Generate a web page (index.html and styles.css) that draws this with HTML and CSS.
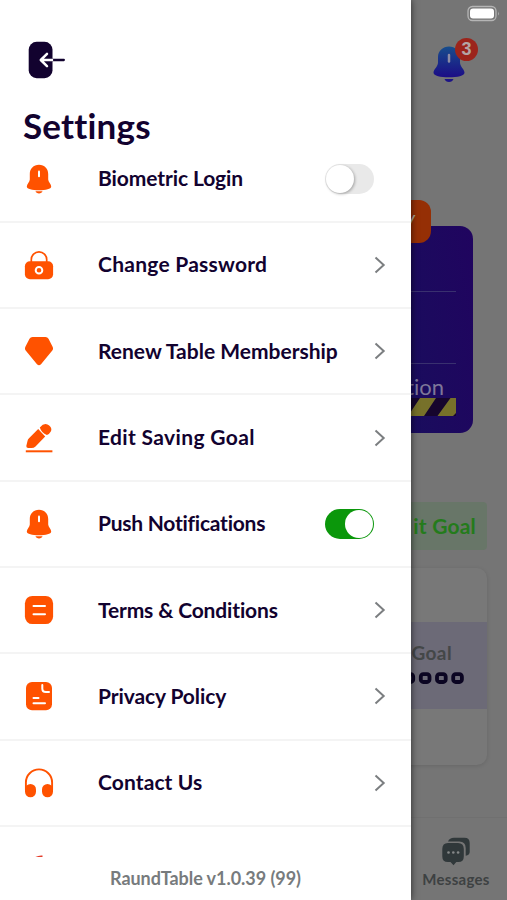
FILE: index.html
```html
<!DOCTYPE html>
<html lang="en">
<head>
<meta charset="utf-8">
<meta name="viewport" content="width=device-width">
<title>Settings</title>
<link rel="stylesheet" href="styles.css">
</head>
<body>
<svg class="defs" width="0" height="0">
  <symbol id="bell" viewBox="0 0 30 30">
    <path d="M15 .8C9.500.8 5.800 4.800 5.800 10v5.500c0 2.300-3 4.800-3 7 0 2.600 5.500 3.700 12.200 3.700s12.200-1.100 12.200-3.700c0-2.200-3-4.700-3-7V10C24.200 4.800 20.500.8 15 .8z"/>
    <path d="M11.500 27.200h7c-.5 1.400-1.800 2.200-3.500 2.200s-3-.8-3.500-2.200z"/>
    <path d="M15 7.500v4.700" stroke="var(--mark)" stroke-width="2" stroke-linecap="round"/>
  </symbol>
  <symbol id="chevron" viewBox="0 0 12 18"><path d="M1.500 1.500 9.700 9l-8.200 7.500" fill="none" stroke="#7b7e80" stroke-width="2"/></symbol>
</svg>

<main class="home">
  <header class="status"><svg width="34" height="18" viewBox="0 0 34 18"><rect x="1" y="1.500" width="28" height="14" rx="4.500" fill="none" stroke="#b5b5b5" stroke-width="1.300"/><rect x="3" y="3.500" width="24" height="10" rx="3" fill="#fff"/><path d="M31 6.500q1.800 2 0 4z" fill="#aaa"/></svg></header>
  <div class="alerts">
    <svg width="34" height="37" viewBox="0 0 34 37"><defs><linearGradient id="blue" x1="0" y1="0" x2="0" y2="1"><stop offset="0" stop-color="#174d8c"/><stop offset="1" stop-color="#1c0c86"/></linearGradient></defs><path d="M17 .5C11 .5 6 5 6 11v5.500c0 4-4.500 7-4.500 10.200 0 3 7 4.600 15.500 4.600s15.500-1.600 15.500-4.600c0-3.200-4.500-6.200-4.500-10.200V11C28 5 23 .5 17 .5z" fill="url(#blue)"/><path d="M12.500 33h9c-.7 2-2.300 3-4.500 3s-3.800-1-4.500-3z" fill="#1c1387"/><path d="M17 9v6.500" stroke="#8c8ca5" stroke-width="2.500" stroke-linecap="round"/></svg>
    <span class="count">3</span>
  </div>
  <section class="plan">
    <span class="tag">y</span>
    <div class="plan-row"></div>
    <div class="plan-row second"></div>
    <p class="plan-note">tion</p>
    <svg class="stripes" width="56" height="18" viewBox="0 0 56 18"><path fill="#16052d" d="M0 0h56v18H0z"/><path fill="#77712a" d="M20 0h16L24 18H8zM50.500 0H56v15l-3 3H37.500z"/></svg>
  </section>
  <div class="edit"><span>it Goal</span></div>
  <section class="goal">
    <div class="goal-band"><p class="goal-label">Goal</p>
      <svg class="zeros" width="74" height="14" viewBox="0 0 74 14" fill="none" stroke="#0b0522" stroke-width="3.800"><rect x="-5.500" y="3.200" width="8.700" height="7.800" rx="2.500"/><rect x="10.800" y="3.200" width="8.700" height="7.800" rx="2.500"/><rect x="27" y="3.200" width="8.700" height="7.800" rx="2.500"/><rect x="43.200" y="3.200" width="8.700" height="7.800" rx="2.500"/></svg>
    </div>
  </section>
  <nav class="tab">
    <svg width="30" height="29" viewBox="0 0 30 29"><path d="M7 4.500Q8.500.8 13 .8h10.500Q28.700.8 28.700 6v9q0 3-4 3.700V11q0-6.500-6.500-6.500z" fill="#30383a"/><path d="M7 6h10q5.800 0 5.800 6v7.500q0 5.500-5.500 5.500h-2L12.500 28.300 9.500 25H7q-5.700 0-5.700-5.500V12Q1.300 6 7 6z" fill="#30383a"/><g fill="#858889"><circle cx="7.500" cy="15.500" r="1.300"/><circle cx="12.300" cy="15.500" r="1.300"/><circle cx="17.100" cy="15.500" r="1.300"/></g></svg>
    <span>Messages</span>
  </nav>
</main>

<aside class="drawer">
  <svg class="back" width="38" height="38" viewBox="0 0 38 38" fill="none" stroke-linecap="round" stroke-linejoin="round"><rect x=".7" y=".8" width="23.800" height="36.400" rx="8"/><path d="M24.500 19h11.300" stroke="#12022f" stroke-width="2.300"/><path d="M24 19H13M19 12.800 12.800 19l6.200 6.200" stroke="#fff" stroke-width="2.500"/></svg>
  <h1><span>Settings</span></h1>
  <ul class="list">
    <li class="row"><svg class="icon"><use href="#bell"/></svg><span class="label l1">Biometric Login</span><i class="switch"></i></li>
    <li class="row"><svg class="icon" viewBox="0 0 30 30"><path d="M7.300 13V9.500a7.700 7.700 0 0 1 15.400 0V13" fill="none" stroke="#ff5200" stroke-width="1.700"/><rect x=".9" y="11.300" width="28.200" height="18" rx="5"/><circle cx="15" cy="20.300" r="3.300" fill="none" stroke="#fff" stroke-width="2"/></svg><span class="label l2">Change Password</span><svg class="chev"><use href="#chevron"/></svg></li>
    <li class="row"><svg class="icon" viewBox="0 0 30 30"><path d="M8.500 1h13q2 0 3 1.800l4.100 8q1.100 2.200-.5 4L17 28.200q-2 2-4 0L1.900 14.800q-1.600-1.800-.5-4l4.100-8Q6.500 1 8.500 1z"/></svg><span class="label l3">Renew Table Membership</span><svg class="chev"><use href="#chevron"/></svg></li>
    <li class="row"><svg class="icon" viewBox="0 0 30 30"><path d="M14.200 6 21.200 13.600 11.500 23.400Q9.800 25 7.500 25H4.200Q2.300 25 2.300 23L3.500 18Q3.700 16.600 5 15.300zM15.800 4.400Q20-.3 23.500 1.500Q28.800 4.500 26.800 8.500Q25.500 11 22.900 12Q17.500 9.800 15.800 4.400z"/><path d="M1.800 28.300h26.600" stroke="#ff5200" stroke-width="2"/></svg><span class="label l4">Edit Saving Goal</span><svg class="chev"><use href="#chevron"/></svg></li>
    <li class="row"><svg class="icon"><use href="#bell"/></svg><span class="label l5">Push Notifications</span><i class="switch on"></i></li>
    <li class="row"><svg class="icon" viewBox="0 0 30 30"><rect x=".9" y=".9" width="28.200" height="28.200" rx="7.500"/><path d="M9.500 11h11.500M9.500 19.300h11.500" stroke="#fff" stroke-width="2" stroke-linecap="round"/></svg><span class="label l6">Terms &amp; Conditions</span><svg class="chev"><use href="#chevron"/></svg></li>
    <li class="row"><svg class="icon" viewBox="0 0 30 30"><rect x="2" y=".9" width="26" height="28.400" rx="6"/><path d="M18.300 4v3.500q0 3.500 3.500 3.500h3.200M9.500 17h5M9.500 22.300h11.500" fill="none" stroke="#fff" stroke-width="2" stroke-linecap="round"/></svg><span class="label l7">Privacy Policy</span><svg class="chev"><use href="#chevron"/></svg></li>
    <li class="row"><svg class="icon" viewBox="0 0 30 30"><path d="M1.900 22V14.500a13.100 13.100 0 0 1 26.200 0V22" fill="none" stroke="#ff5200" stroke-width="1.900"/><rect x="1" y="16" width="11" height="13.300" rx="5.500"/><rect x="18" y="16" width="11" height="13.300" rx="5.500"/></svg><span class="label l8">Contact Us</span><svg class="chev"><use href="#chevron"/></svg></li>
    <li class="row last"><svg class="icon" viewBox="0 0 30 30"><path d="M10.500 2.500Q14.500 0 18.500.5v3.500h-8z" fill="#e43d2b"/></svg></li>
  </ul>
  <footer><span>RaundTable v1.0.39 (99)</span></footer>
</aside>
</body>
</html>
```

FILE: styles.css
```css
* { box-sizing: border-box; }
body {
  margin: 0;
  width: 507px;
  height: 900px;
  overflow: hidden;
  background: #757575;
  color: #12022f;
  font-family: Lato, "Liberation Sans", sans-serif;
  font-variant-ligatures: none;
}
p, h1, ul { margin: 0; padding: 0; }
svg { display: block; flex: none; }
.defs { position: absolute; }

.drawer {
  position: absolute;
  inset: 0 auto 0 0;
  width: 411px;
  display: flex;
  flex-direction: column;
  background: #fff;
  box-shadow: 0 0 7px rgba(0, 0, 0, .65);
}
.back { margin: 41px 0 0 28px; }
.back rect { fill: #12022f; }
h1 {
  height: 71px;
  padding: 26px 0 0 23px;
  font-size: 35px;
  line-height: 40px;
  font-weight: 700;
  letter-spacing: .2px;
}
.list {
  height: 707px;
  overflow: hidden;
  list-style: none;
}
.row {
  display: flex;
  align-items: center;
  height: 86.300px;
  padding: 0 24px;
  border-bottom: 2px solid #f4f4f4;
}
.row:first-child { margin-top: -13.500px; }
.row.last { border: 0; }
.icon {
  width: 30px;
  height: 30px;
  margin-right: 44px;
  fill: #ff5200;
  --mark: #fff;
}
.label {
  margin-top: -1px;
  font-size: 21px;
  line-height: 28px;
  font-weight: 700;
  white-space: nowrap;
}
.l1 { letter-spacing: -.1px; }
.l2 { letter-spacing: .25px; }
.l3 { letter-spacing: 0; }
.l4 { letter-spacing: .35px; }
.l5 { letter-spacing: -.25px; }
.l6 { letter-spacing: -.15px; }
.l7 { letter-spacing: -.1px; }
.l8 { letter-spacing: .1px; }
.chev { width: 12px; height: 18px; margin-left: auto; margin-right: 1px; }
.switch {
  width: 49px;
  height: 30px;
  margin-left: auto;
  margin-right: 13px;
  padding: 1px;
  border-radius: 15px;
  background: #e9e9e9;
}
.switch::before {
  content: "";
  display: block;
  width: 28px;
  height: 28px;
  border-radius: 50%;
  background: #fff;
  box-shadow: 1px 1px 3px rgba(0, 0, 0, .3);
}
.switch.on { background: #0b970b; }
.switch.on::before { margin-left: 19px; box-shadow: none; }
footer {
  flex: 1;
  padding-top: 9px;
  color: #777b7d;
  font-size: 18px;
  line-height: 24px;
  font-weight: 700;
  letter-spacing: -.05px;
  text-align: center;
}

.home { display: flex; flex-direction: column; align-items: flex-end; height: 900px; }
.status { height: 44px; padding: 5px 6px 0 0; }
.alerts { position: relative; width: 75px; height: 182px; padding-top: 2px; }
.count {
  position: absolute;
  left: 23px;
  top: -6px;
  width: 23px;
  height: 23px;
  border-radius: 50%;
  background: #9c241b;
  color: #b4a5a5;
  font: 700 18px/23px "Liberation Sans", sans-serif;
  text-align: center;
}
.plan {
  position: relative;
  width: 440px;
  height: 207px;
  margin-right: 34px;
  padding-right: 17px;
  border-radius: 13px;
  background: linear-gradient(80deg, #17105d 72%, #20045f);
}
.tag {
  position: absolute;
  right: 42px;
  top: -26px;
  width: 80px;
  height: 43px;
  padding-right: 16px;
  border-radius: 12px;
  background: #952f05;
  color: #aaa295;
  font-size: 22px;
  font-style: italic;
  line-height: 36px;
  text-align: right;
}
.plan-row { height: 66px; border-bottom: 1px solid #39306f; }
.plan-row.second { height: 72px; }
.plan-note { height: 34px; padding: 10px 12px 0 0; color: #7e7799; font-size: 22px; line-height: 26px; text-align: right; }
.stripes { margin-left: auto; }
.edit {
  width: 180px;
  height: 48px;
  margin: 69px 20px 0 0;
  padding-right: 11px;
  border-radius: 4px;
  background: #687668;
  color: #247b1b;
  font-size: 21px;
  font-weight: 700;
  line-height: 47px;
  letter-spacing: .2px;
  text-align: right;
}
.goal {
  width: 460px;
  height: 197px;
  margin: 18px 20px 0 0;
  padding-top: 54px;
  border-radius: 10px;
  background: #787878;
  box-shadow: 0 1px 4px rgba(0, 0, 0, .12);
}
.goal-band { height: 87px; padding: 19px 3px 0 0; background: #6c6a77; display: flex; flex-direction: column; align-items: flex-end; }
.goal-label { padding-right: 32px; color: #444748; font-size: 19px; line-height: 24px; font-weight: 700; letter-spacing: .4px; }
.zeros { margin-top: 6px; overflow: visible; }
.tab {
  display: flex;
  flex-direction: column;
  align-items: center;
  width: 102px;
  height: 83px;
  margin-top: 52px;
  padding-top: 19px;
  border-top: 1px solid #707070;
  color: #3d4142;
  font-size: 15px;
  line-height: 20px;
  font-weight: 700;
  letter-spacing: .3px;
}
.tab span { margin-top: 3px; }
```
